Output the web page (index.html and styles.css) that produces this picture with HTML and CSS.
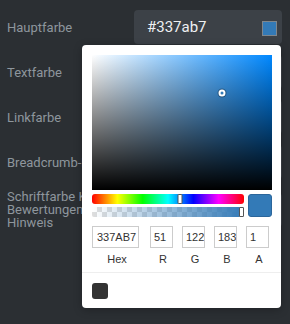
FILE: index.html
```html
<!DOCTYPE html>
<html>
<head>
  <meta charset="UTF-8">
  <title>Farben</title>
  <link rel="stylesheet" href="styles.css">
</head>
<body>
  <form class="settings">
    <label class="label">Hauptfarbe</label>
    <div class="field">
      <div class="color-input">
        <span class="value">#337ab7</span>
        <span class="swatch"></span>
      </div>

      <div class="picker">
        <div class="sat">
          <span class="sat-thumb" style="left: 72.1%; top: 28.2%"></span>
        </div>
        <div class="bars">
          <div class="sliders">
            <div class="hue"><span class="hue-thumb" style="left: 57.8%"></span></div>
            <div class="alpha"><span class="alpha-thumb"></span></div>
          </div>
          <div class="preview"></div>
        </div>
        <div class="inputs">
          <div class="cell hex"><input type="text" value="337AB7"><span>Hex</span></div>
          <div class="cell"><input type="text" value="51"><span>R</span></div>
          <div class="cell"><input type="text" value="122"><span>G</span></div>
          <div class="cell"><input type="text" value="183"><span>B</span></div>
          <div class="cell"><input type="text" value="1"><span>A</span></div>
        </div>
        <div class="recent">
          <span class="chip"></span>
        </div>
      </div>
    </div>

    <label class="label">Textfarbe</label>
    <div class="field"><div class="color-input"><span class="value">#333333</span></div></div>

    <label class="label">Linkfarbe</label>
    <div class="field"><div class="color-input"><span class="value">#337ab7</span></div></div>

    <label class="label">Breadcrumb-Farbe</label>
    <div class="field"><div class="color-input"><span class="value">#777777</span></div></div>

    <label class="label">Schriftfarbe Kunden-<br>Bewertungen<br>Hinweis</label>
    <div class="field"><div class="color-input"><span class="value">#333333</span></div></div>
  </form>
</body>
</html>
```

FILE: styles.css
```css
html, body {
  height: 100%;
}
body {
  box-sizing: border-box;
  margin: 0;
  padding: 10px 8px 0 7px;
  background-color: #2b2f33;
  font-family: Roboto, "Liberation Sans", sans-serif;
}
.settings {
  display: grid;
  grid-template-columns: 127px 148px;
  row-gap: 11px;
  align-items: center;
}
.label {
  color: #8e969d;
  font-size: 13px;
  line-height: 13px;
  white-space: nowrap;
}
.field {
  position: relative;
}
.color-input {
  height: 34px;
  display: flex;
  align-items: center;
  justify-content: space-between;
  padding: 0 5px 0 13px;
  background-color: #3c4147;
  border-radius: 4px;
}
.value {
  color: #eef0f2;
  font-size: 15px;
}
.swatch {
  width: 13px;
  height: 13px;
  margin-top: 2px;
  background-color: #337ab7;
  border: 1px solid #7f868c;
}

/* picker popup */
.picker {
  position: absolute;
  z-index: 10;
  top: 35px;
  left: -52px;
  width: 180px;
  padding: 10px 9px 9px 10px;
  background-color: #fff;
  border-radius: 4px;
  box-shadow: 0 2px 8px rgba(0, 0, 0, 0.25);
  font-family: "Liberation Sans", Arial, sans-serif;
  font-size: 11px;
  color: #333;
}
.sat {
  position: relative;
  height: 135px;
  background: linear-gradient(to top, #000, rgba(0, 0, 0, 0)),
              linear-gradient(to right, #fff, rgb(0, 136, 255));
}
.sat-thumb {
  position: absolute;
  width: 3px;
  height: 3px;
  border: 2px solid #fff;
  border-radius: 50%;
  background-color: #337ab7;
  box-shadow: 0 0 0 1px rgba(0, 0, 0, 0.3);
  transform: translate(-50%, -50%);
}
.bars {
  display: flex;
  gap: 4px;
  margin-top: 4px;
}
.sliders {
  flex: 1;
  display: flex;
  flex-direction: column;
  gap: 3px;
}
.hue, .alpha {
  position: relative;
  height: 10px;
  border-radius: 3px;
}
.hue {
  background: linear-gradient(to right, #f00, #ff0, #0f0, #0ff, #00f, #f0f, #f00);
}
.alpha {
  border-radius: 2px;
  background: linear-gradient(to right, rgba(51, 122, 183, 0), #337ab7),
              conic-gradient(#dedede 25%, #fff 0 50%, #dedede 0 75%, #fff 0) 0 0 / 10px 10px;
}
.hue-thumb, .alpha-thumb {
  position: absolute;
  top: 0;
  width: 3px;
  height: 8px;
  background-color: #fff;
  border: 1px solid #555;
  border-radius: 1px;
}
.hue-thumb {
  transform: translateX(-50%);
}
.alpha-thumb {
  right: 0;
}
.preview {
  width: 22px;
  height: 21px;
  background-color: #337ab7;
  border: 1px solid #2b669b;
  border-radius: 3px;
}
.inputs {
  display: flex;
  gap: 9px;
  margin-top: 9px;
}
.cell {
  width: 23px;
  display: flex;
  flex-direction: column;
  align-items: center;
}
.cell.hex {
  width: 47px;
  margin-right: 2px;
}
.cell input {
  width: 100%;
  height: 22px;
  box-sizing: border-box;
  padding: 0 0 0 3px;
  border: 1px solid #ccc;
  font-family: inherit;
  font-size: 11px;
  color: #333;
}
.hex input {
  padding-left: 4px;
}
.cell span {
  margin-top: 5px;
  padding-left: 3px;
  line-height: 13px;
}
.recent {
  margin: 6px -9px 0 -10px;
  padding: 10px 10px 0;
  border-top: 1px solid #eee;
}
.chip {
  display: block;
  width: 16px;
  height: 16px;
  background-color: #333;
  border-radius: 3px;
}
```
